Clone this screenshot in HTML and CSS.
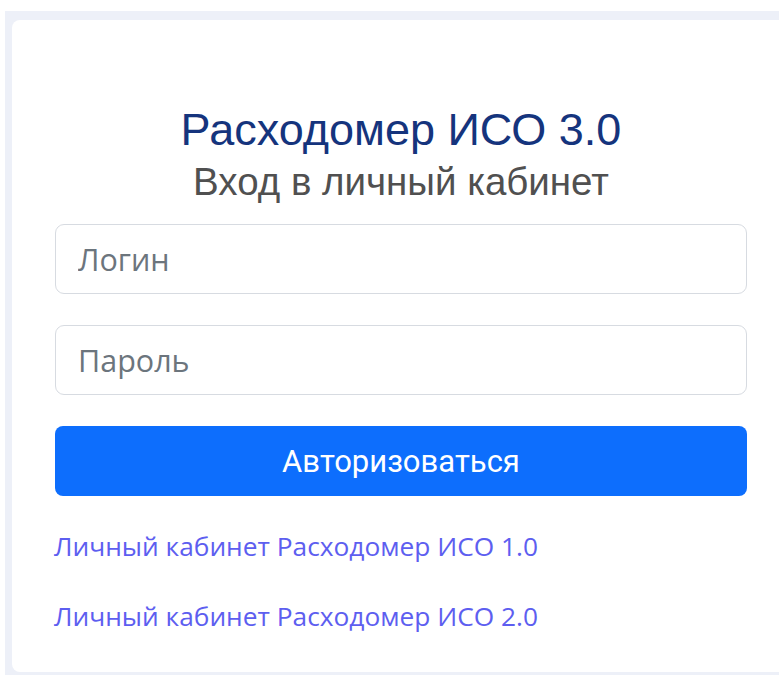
FILE: index.html
```html
<!DOCTYPE html>
<html lang="ru">
<head>
<meta charset="utf-8">
<title>Расходомер ИСО 3.0 — вход</title>
<link rel="stylesheet" href="styles.css">
</head>
<body>
<div class="backdrop">
  <main class="card">
    <h1 class="title">Расходомер ИСО 3.0</h1>
    <h2 class="subtitle">Вход в личный кабинет</h2>
    <form class="login-form">
      <input class="field" type="text" placeholder="Логин">
      <input class="field" type="password" placeholder="Пароль">
      <button class="submit" type="button">Авторизоваться</button>
    </form>
    <nav class="legacy-links">
      <a class="legacy-link" href="#">Личный кабинет Расходомер ИСО 1.0</a>
      <a class="legacy-link" href="#">Личный кабинет Расходомер ИСО 2.0</a>
    </nav>
  </main>
</div>
</body>
</html>
```
FILE: styles.css
```css
html, body {
  margin: 0;
  height: 675px;
  overflow: hidden;
  background: #ffffff;
}

.backdrop {
  box-sizing: border-box;
  height: 664px;
  margin: 11px 0 0 5px;
  padding: 9px 0 0 7px;
  background: #edf0f8;
}

.card {
  box-sizing: border-box;
  width: 778px;
  height: 652px;
  padding: 84px 43px 0 43px;
  background: #ffffff;
  border-radius: 8px 0 0 8px;
}

.title {
  margin: 0;
  font: 400 45px/52px "Liberation Sans", Arial, sans-serif;
  color: #15347d;
  text-align: center;
}

.subtitle {
  margin: 4px 0 0;
  font: 400 38.5px/44px "Liberation Sans", Arial, sans-serif;
  color: #505050;
  text-align: center;
}

.login-form {
  display: flex;
  flex-direction: column;
  gap: 31px;
  margin-top: 20px;
}

.field {
  box-sizing: border-box;
  height: 70px;
  margin: 0;
  padding: 0 22px;
  border: 1px solid #d7dbe1;
  border-radius: 9px;
  background: #ffffff;
  font: 400 30.5px "Open Sans", sans-serif;
  color: #212529;
  outline: none;
}

.field::placeholder {
  color: #6c757d;
}

.submit {
  height: 70px;
  margin: 0;
  border: 0;
  border-radius: 8px;
  background: #0d6efd;
  color: #ffffff;
  font: 400 31px Roboto, sans-serif;
}

.legacy-links {
  display: flex;
  flex-direction: column;
  gap: 34px;
  margin-top: 32px;
}

.legacy-link {
  margin-left: -1px;
  font: 400 26.3px/36px "Open Sans", sans-serif;
  color: #5d5ef0;
  text-decoration: none;
}
```
